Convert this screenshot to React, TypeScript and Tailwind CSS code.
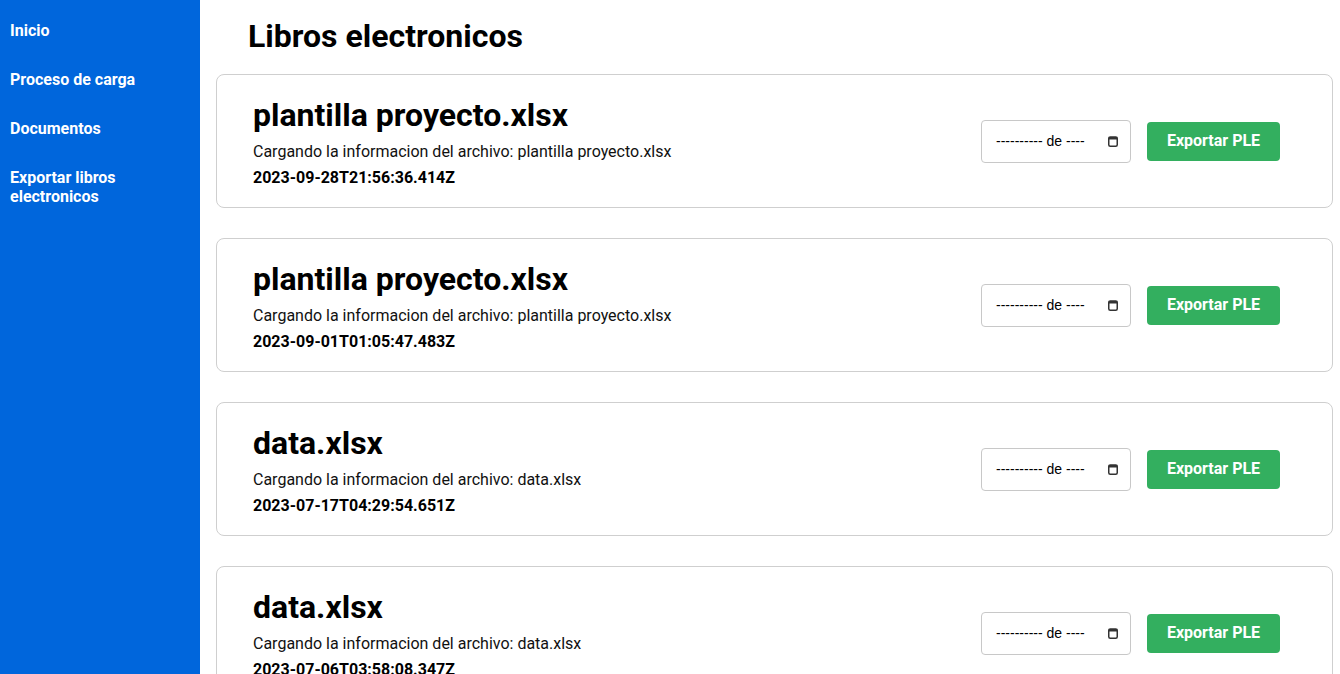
import React from 'react';

type Libro = {
    nombre: string;
    fecha: string;
};

const libros: Libro[] = [
    { nombre: 'plantilla proyecto.xlsx', fecha: '2023-09-28T21:56:36.414Z' },
    { nombre: 'plantilla proyecto.xlsx', fecha: '2023-09-01T01:05:47.483Z' },
    { nombre: 'data.xlsx', fecha: '2023-07-17T04:29:54.651Z' },
    { nombre: 'data.xlsx', fecha: '2023-07-06T03:58:08.347Z' },
];

const menu = ['Inicio', 'Proceso de carga', 'Documentos', 'Exportar libros electronicos'];

const CalendarIcon: React.FC = () => (
    <svg width="10" height="11" viewBox="0 0 10 11" fill="none">
        <rect x="0.75" y="1" width="8.5" height="9.25" rx="1.5" stroke="#333" strokeWidth="1.5" />
        <rect x="0.75" y="1" width="8.5" height="2.5" fill="#333" />
    </svg>
);

const Sidebar: React.FC = () => {
    return (
        <aside className="w-[200px] shrink-0 bg-[#0066dc] min-h-screen pt-[21px] px-[10px]">
            <ul className="flex flex-col gap-[30px]">
                {menu.map((item) => (
                    <li key={item}>
                        <a href="#" className="block text-white font-bold text-[16px] leading-[19px] pr-12">
                            {item}
                        </a>
                    </li>
                ))}
            </ul>
        </aside>
    );
};

const LibroCard: React.FC<{ libro: Libro }> = ({ libro }) => {
    return (
        <div className="border border-[#cfcfcf] rounded-lg h-[134px] flex items-start justify-between pl-[36px] pr-[52px]">
            <div className="pt-[21px]">
                <h2 className="text-[32px] leading-[38px] font-bold text-black">{libro.nombre}</h2>
                <p className="text-[16px] leading-[26px] mt-[5px] text-[#111]">
                    Cargando la informacion del archivo: {libro.nombre}
                </p>
                <p className="text-[16px] leading-[26px] font-bold text-black">{libro.fecha}</p>
            </div>
            <div className="flex items-center gap-4 self-center">
                <div className="w-[150px] h-[43px] border border-[#c8c8c8] rounded-[4px] flex items-center justify-between pl-[14px] pr-[12px] bg-white">
                    <span className="text-[14px] text-black font-['Liberation_Sans',sans-serif]">---------- de ----</span>
                    <CalendarIcon />
                </div>
                <button className="w-[133px] h-[39px] bg-[#33af5f] rounded-[4px] text-white font-bold text-[16px]">
                    Exportar PLE
                </button>
            </div>
        </div>
    );
};

export default function App() {
    return (
        <div className="flex h-[674px] overflow-hidden bg-white" style={{ fontFamily: 'Roboto, "Liberation Sans", sans-serif' }}>
            <Sidebar />
            <main className="flex-1 pl-4 pr-[7px]">
                <h1 className="text-[32px] leading-[38px] font-bold text-black pl-8 pt-[17px] pb-[19px]">
                    Libros electronicos
                </h1>
                <div className="flex flex-col gap-[30px]">
                    {libros.map((libro, i) => (
                        <LibroCard key={i} libro={libro} />
                    ))}
                </div>
            </main>
        </div>
    );
}
